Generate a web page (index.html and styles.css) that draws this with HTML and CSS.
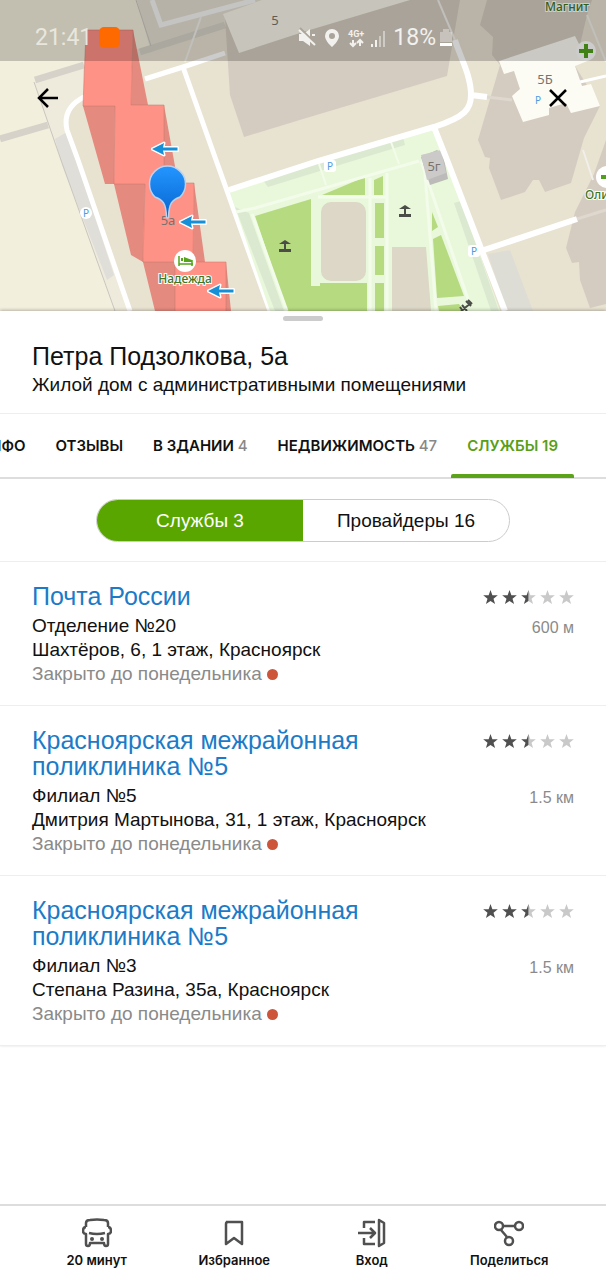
FILE: index.html
```html
<!DOCTYPE html>
<html lang="ru">
<head>
<meta charset="utf-8">
<meta name="viewport" content="width=device-width, initial-scale=1">
<title>Петра Подзолкова, 5а</title>
<link rel="stylesheet" href="styles.css">
</head>
<body>
<svg class="defs" aria-hidden="true">
  <symbol id="star" viewBox="0 0 16 16"><path d="M8 0l2 5.500 5.800.1-4.600 3.700L12.900 15 8 11.700 3.100 15l1.700-5.700L.2 5.600 6 5.500z"/></symbol>
  <symbol id="half" viewBox="0 0 16 16"><path fill="#c9c9c9" d="M8 0l2 5.500 5.800.1-4.600 3.700L12.900 15 8 11.700z"/><path d="M8 0v11.700L3.100 15l1.700-5.700L.2 5.600 6 5.500z"/></symbol>
  <symbol id="arrow" viewBox="0 0 28 16"><path d="M1 8L13 2 12 6.500H26.500V9.500H12L13 14z" fill="#1590d8" stroke="#fff" stroke-width="3" stroke-linejoin="round" paint-order="stroke"/></symbol>
  <symbol id="table" viewBox="0 0 12 12"><path d="M6 0L12 4H7V9H12V12H0V9H5V4H0z" fill="#4a4d48"/></symbol>
</svg>
<div class="app">
  <header class="map">
    <svg class="map-canvas" viewBox="0 0 606 311" preserveAspectRatio="xMidYMin slice" role="img" aria-label="Карта">
      <defs><linearGradient id="pin" x2="0" y2="1"><stop offset="0" stop-color="#2496ff"/><stop offset="1" stop-color="#0664cf"/></linearGradient></defs>
      <path fill="#f3efdd" d="M0 0h606v311H0z"/>
      <path fill="#e8e2d1" d="M137 0H606V311H130L78 160 66 128 70 110 83 98 83 66 150 45z"/>
      <path fill="#efebdc" d="M34 82L83 68V97L66 115V130L130 311H115L60 160z"/>
      <path fill="#dfded8" d="M55 139L67 132 114 275 107 280 62 165z"/>
      <path fill="#e4dfd3" d="M137 0H290L223 22 150 48z"/>
      <g fill="none" stroke="#d6d2c9">
        <path stroke-width="7" d="M35 80L84 65M0 139L48 125M140 52L225 25"/>
        <path stroke="#c9c6bf" d="M34 82L61 160 115 311M136 0L151 46"/>
      </g>
      <path fill="#d5ccc1" d="M225 18L230 95 244 137 303 119 447 76 460 0H400z"/>
      <path fill="#f9f6ea" d="M223 14L262 0H410L303 32 239 53z"/>
      <path fill="#d5ccc1" d="M487 0L480 25 493 37 492 55 500 65 478 140 485 157 490 158 489 168 501 200 525 192 533 180 539 180 545 192 571 183 584 138 600 106 575 66 587 15 592 0z"/>
      <path fill="#d5ccc1" d="M606 140L594 174 575 212 566 248 572 263 579 262 580 280 590 308 606 304z"/>
      <path fill="#deddd5" d="M488 254L510 250 533 311H507z"/>
      <g fill="none" stroke="#fff" stroke-width="5">
        <path d="M84 97Q62 108 67 130L78 160 130 311M145 79L183 67 225 53M183 67L216 160 270 311" />
        <path d="M152 0L161 25 255 0" stroke="#f6f5f4"/>
        <path stroke="#f1efe9" stroke-width="2" d="M201 17L185 62M438 0L455 40M583 150L593 180M587 15L606 62"/>
        <path stroke="#ded8cf" stroke-width="3" d="M487 97L512 100M577 219L606 210"/>
        <path d="M580 82L606 76" stroke-width="3"/>
      </g>
      <path fill="#e9f8da" d="M229 190L318 162 434 129 450 170 500 311H270z"/>
      <g fill="#dce9d1">
        <path d="M262 179L403 137 405 145 320 171 268 187z"/>
        <path d="M454 203L461 201 499 311H491z"/>
        <path d="M235 207L249 213 284 311H275z"/>
      </g>
      <path fill="#b6da80" d="M255 216L311 199V286H320V283H367V311H287zM322 195L365 177V195zM374 180L383 176V195H374zM375 203H384V238H375zM375 246H384V275H375zM375 283H384V311H375zM432 212L438 227 432 231zM433 239L441 235 464 296 437 298zM438 306L459 304 464 311H439z"/>
      <g fill="none" stroke="#f3fbea">
        <path stroke-width="3" d="M236 212L255 208 419 161M252 214L287 311M387 173V311M370 178V311M425 174L436 311M421 161L468 299M318 197H388"/>
        <path stroke-width="2" d="M319 164L326 185M391 142L399 164"/>
      </g>
      <rect x="321" y="202" width="45" height="79" rx="10" fill="#dcd7c6"/>
      <path fill="#dcd7c6" d="M392 247H426L431 311H392z"/>
      <path fill="#bdbbb9" d="M421 157L437 150 443 154 448 179 430 185z"/>
      <path fill="#cbcac8" d="M421 155L441 150 446 173 427 180z"/>
      <g fill="none" stroke="#fff" stroke-width="6">
        <path d="M229 190L318 161 434 127C465 117 471 109 471 95 471 75 460 57 455 40M471 95L487 97"/>
        <path d="M434 127L449 165 505 311M484 250L577 219"/>
      </g>
      <path fill="#fdfcf4" d="M499 61L575 36 582 50 590 60 575 66 582 86 591 84 600 106 571 113 566 103 549 108V115L523 122 512 96 520 89 514 71 504 74z"/>
      <g stroke="#c97469" stroke-width="1">
        <path fill="#e58a7f" stroke="none" d="M133 30L148 105H131zM83 106L115 105 114 184H105zM164 105L178 183H164zM114 184H145L143 255V262L131 255zM194 183L205 262H193zM143 262H175V311H155zM226 262L231 311H226z"/>
        <path fill="#ff9287" stroke-opacity=".5" d="M86 30H133L131 105H164V183H194L193 262H226V312H175V262H143L145 184H114L115 106H83z"/>
      </g>
      <use href="#arrow" x="151" y="141" width="28" height="16"/>
      <use href="#arrow" x="179" y="214" width="28" height="16"/>
      <use href="#arrow" x="207" y="283" width="28" height="16"/>
      <text class="house" x="168" y="225">5а</text>
      <path d="M166.500 217C166 203 163 200 155 197A18 18 0 1 1 180 197C172 200 169 203 168.500 217A1 1 0 0 1 166.500 217z" fill="url(#pin)" stroke="#b9d2f2" stroke-width="1.500"/>
      <circle cx="185" cy="261" r="11" fill="#fff"/>
      <path d="M179 256V266M179 264H193M192 266V260" fill="none" stroke="#54a51a" stroke-width="1.500"/>
      <path d="M184 257L192 260V262H184zM181 258h2v3h-2z" fill="#54a51a"/>
      <text class="poi" x="185" y="283">Надежда</text>
      <text class="poi" x="567" y="11">Магнит</text>
      <text class="poi poi-start" x="585" y="199">Оли</text>
      <text class="house" x="275" y="25">5</text>
      <text class="house" x="545" y="84">5Б</text>
      <text class="house" x="434" y="171">5г</text>
      <g fill="#fff"><circle cx="86" cy="213" r="6"/><rect x="324" y="160" width="12" height="12" rx="3"/><rect x="468" y="245" width="12" height="12" rx="3"/><circle cx="586" cy="51" r="10"/><circle cx="607" cy="177" r="11"/></g>
      <text class="parking" x="86" y="217">P</text><text class="parking" x="330" y="170">P</text><text class="parking" x="474" y="255">P</text><text class="parking" x="538" y="104">P</text>
      <path d="M586 44V58M579 51H593" stroke="#50a01b" stroke-width="4"/><path d="M601 177H606" stroke="#50a01b" stroke-width="4"/>
      <use href="#table" x="279" y="240" width="12" height="12"/><use href="#table" x="399" y="205" width="12" height="12"/>
      <path d="M461 311L471 303M462 305L467 311M460 307L463 311M466 301L471 306M468 300L472 304" stroke="#4a4d48" stroke-width="2"/>
    </svg>
    <div class="status">
      <span class="clock">21:41</span><span class="badge"></span>
      <svg class="status-icons" width="90" height="24" viewBox="0 0 90 24" fill="#f2f1ed">
        <path d="M4 8H8L15 3V20L8 15H4z"/><path d="M5 2L20 17" stroke="#aaa598" stroke-width="2"/><path d="M4 4L20 19" stroke="#f2f1ed" stroke-width="2"/><path d="M17 9H20" stroke="#f2f1ed" stroke-width="2"/>
        <path fill-rule="evenodd" d="M37 3a7 7 0 0 0-7 7c0 5 7 11 7 11s7-6 7-11a7 7 0 0 0-7-7zm0 4a3 3 0 1 1 0 6 3 3 0 0 1 0-6z"/>
        <text class="network" x="53" y="11">4G+</text><path d="M58 14V20M55 17L58 20 61 17M65 20V14M62 17L65 14 68 17" fill="none" stroke="#f2f1ed" stroke-width="2"/>
        <path d="M76 18h2v3h-2zM80 14h2v7h-2z"/><path opacity=".5" d="M84 10h2v11h-2zM88 5h2v16h-2z"/>
      </svg>
      <span class="charge">18%</span>
      <svg width="12" height="20" viewBox="0 0 12 20"><path d="M0 4H3V1H9V4H12V14H0z" fill="#f2f1ed" opacity=".4"/><path d="M0 15H12V18H0z" fill="#fff"/></svg>
    </div>
    <div class="map-actions">
      <button class="icon-button" aria-label="Назад"><svg width="24" height="24" viewBox="0 0 24 24"><path d="M22 12H3M12 3L3 12 12 21"/></svg></button>
      <button class="icon-button" aria-label="Закрыть"><svg width="24" height="24" viewBox="0 0 24 24"><path d="M4 4L20 20M20 4L4 20"/></svg></button>
    </div>
  </header>

  <main class="sheet">
    <div class="grip"></div>
    <div class="heading">
      <h1>Петра Подзолкова, 5а</h1>
      <p>Жилой дом с административными помещениями</p>
    </div>
    <nav class="tabs">
      <a href="#info">ИНФО</a>
      <a href="#reviews">ОТЗЫВЫ</a>
      <a href="#inside">В ЗДАНИИ <span>4</span></a>
      <a href="#estate">НЕДВИЖИМОСТЬ <span>47</span></a>
      <a class="active" href="#services">СЛУЖБЫ 19</a>
    </nav>
    <div class="switch-row">
      <div class="switch">
        <button class="selected">Службы 3</button>
        <button>Провайдеры 16</button>
      </div>
    </div>
    <section class="list">
      <article class="item">
        <div class="info">
          <h2><a href="#post">Почта России</a></h2>
          <p>Отделение №20</p>
          <p>Шахтёров, 6, 1 этаж, Красноярск</p>
          <p class="closed">Закрыто до понедельника<i class="dot"></i></p>
        </div>
        <div class="side">
          <div class="stars" role="img" aria-label="2,5 из 5"><svg><use href="#star"/></svg><svg><use href="#star"/></svg><svg><use href="#half"/></svg><svg class="empty"><use href="#star"/></svg><svg class="empty"><use href="#star"/></svg></div>
          <span class="distance">600 м</span>
        </div>
      </article>
      <article class="item tall">
        <div class="info">
          <h2><a href="#clinic5">Красноярская межрайонная поликлиника №5</a></h2>
          <p>Филиал №5</p>
          <p>Дмитрия Мартынова, 31, 1 этаж, Красноярск</p>
          <p class="closed">Закрыто до понедельника<i class="dot"></i></p>
        </div>
        <div class="side">
          <div class="stars" role="img" aria-label="2,5 из 5"><svg><use href="#star"/></svg><svg><use href="#star"/></svg><svg><use href="#half"/></svg><svg class="empty"><use href="#star"/></svg><svg class="empty"><use href="#star"/></svg></div>
          <span class="distance">1.5 км</span>
        </div>
      </article>
      <article class="item tall">
        <div class="info">
          <h2><a href="#clinic3">Красноярская межрайонная поликлиника №5</a></h2>
          <p>Филиал №3</p>
          <p>Степана Разина, 35а, Красноярск</p>
          <p class="closed">Закрыто до понедельника<i class="dot"></i></p>
        </div>
        <div class="side">
          <div class="stars" role="img" aria-label="2,5 из 5"><svg><use href="#star"/></svg><svg><use href="#star"/></svg><svg><use href="#half"/></svg><svg class="empty"><use href="#star"/></svg><svg class="empty"><use href="#star"/></svg></div>
          <span class="distance">1.5 км</span>
        </div>
      </article>
    </section>
  </main>

  <footer class="bottom">
    <button><svg viewBox="0 0 30 30"><path d="M4 9V5Q4 2 8 2Q15 1 22 2Q26 2 26 5V9M4 9Q1 9 1 13 1 16 4 16V26Q4 28 6 28 8 28 8 25H22Q22 28 24 28 26 28 26 26V16Q29 16 29 13 29 9 26 9M7 15Q15 17 23 15"/><circle class="solid" cx="10" cy="21" r="2"/><circle class="solid" cx="20" cy="21" r="2"/></svg>20 минут</button>
    <button><svg viewBox="0 0 30 30"><path d="M7 4H23V26L15 20 7 26V6Q7 4 9 4"/></svg>Избранное</button>
    <button><svg viewBox="0 0 30 30"><path d="M18 4H7V10M7 20V26H18M1 15H18M13 10L18 15 13 20M22 2L27 5V25L22 28z"/></svg>Вход</button>
    <button><svg viewBox="0 0 30 30"><circle cx="5" cy="8" r="4"/><circle cx="25" cy="8" r="4"/><circle cx="15" cy="23" r="4"/><path d="M9 8H21M7 12L13 19"/></svg>Поделиться</button>
  </footer>
</div>
</body>
</html>
```
FILE: styles.css
```css
* { box-sizing: border-box; }
body { margin: 0; background: #fff; color: #111; font-family: "Liberation Sans", Arial, sans-serif; }
h1, h2, p { margin: 0; font-weight: 400; }
a { color: inherit; text-decoration: none; }
button { font: inherit; color: inherit; background: none; border: 0; padding: 0; cursor: pointer; }
.defs { display: none; }
.app { display: flex; flex-direction: column; min-height: 100vh; overflow: hidden; }

.map { position: relative; aspect-ratio: 606 / 311; max-height: 420px; overflow: hidden; }
.map-canvas { display: block; width: 100%; height: 100%; }
.map text { font-family: "Noto Sans", sans-serif; }
.house { font-size: 13px; fill: #77736e; text-anchor: middle; }
.poi { font-size: 12px; font-weight: 500; fill: #3d771f; text-anchor: middle; stroke: #fff; stroke-width: 2px; paint-order: stroke; }
.poi-start { text-anchor: start; }
.parking { font-size: 10px; fill: #4b9be0; text-anchor: middle; }
.status { position: absolute; inset: 0 0 auto; height: 61px; padding: 14px 154px 0 35px; display: flex; align-items: center; background: rgb(0 0 0 / 20%); color: #f2f1ed; font: 23px Roboto, sans-serif; }
.clock { color: #e9e7dd; }
.badge { width: 21px; height: 21px; margin-left: 7px; border-radius: 5px; background: #ff6a00; }
.status-icons { margin-left: auto; flex: none; }
.map .network { font: 700 9px Roboto, sans-serif; }
.charge { margin: 0 4px 0 8px; }
.map-actions { position: absolute; inset: 78px 28px auto; display: flex; justify-content: space-between; }
.icon-button { width: 40px; height: 40px; display: grid; place-items: center; }
.icon-button path { fill: none; stroke: #000; stroke-width: 2.500; }

.sheet { position: relative; background: #fff; box-shadow: 0 -1px 3px rgb(0 0 0 / 25%); }
.grip { width: 40px; height: 5px; margin: 5px auto 0; border-radius: 3px; background: #ccc; }
.heading { padding: 20px 32px 14px; border-bottom: 1px solid #eee; }
h1 { font-size: 25px; line-height: 30px; }
.heading p { font-size: 19px; line-height: 28px; }
.tabs { display: flex; justify-content: flex-end; gap: 30px; padding: 0 48px 0 32px; border-bottom: 2px solid #ddd; font: 600 15px/63px Inter, sans-serif; white-space: nowrap; }
.tabs span { color: #888; font-weight: 500; }
.tabs .active { position: relative; color: #5a9e18; }
.tabs .active::after { content: ""; position: absolute; inset: auto -16px -1px; height: 4px; border-radius: 2px 2px 0 0; background: #5ba318; }
.switch-row { display: flex; justify-content: center; padding: 20px 32px 19px; border-bottom: 1px solid #eee; }
.switch { display: flex; width: 100%; max-width: 414px; height: 43px; border: 1px solid #ccc; border-radius: 22px; overflow: hidden; font-size: 19px; }
.switch button { flex: 1; }
.switch .selected { background: #59a600; color: #fff; }

.item { display: flex; justify-content: space-between; gap: 24px; padding: 21px 32px 19px; border-bottom: 1px solid #eee; }
.info { font-size: 19px; line-height: 24px; }
h2 { max-width: 400px; margin-bottom: 5px; color: #1b7bc8; font-size: 25px; line-height: 26px; }
.closed { color: #8a8a8a; }
.dot { display: inline-block; width: 11px; height: 11px; margin-left: 5px; border-radius: 50%; background: #cc553a; }
.side { display: flex; flex-direction: column; align-items: flex-end; flex: none; }
.stars { display: flex; gap: 4px; padding-top: 7px; }
.stars svg { width: 15px; height: 15px; fill: #505050; }
.stars .empty { fill: #c9c9c9; }
.distance { margin-top: 11px; color: #8a8a8a; font-size: 16px; line-height: 24px; }
.tall .distance { margin-top: 37px; }

.bottom { display: grid; grid-template-columns: repeat(4, 1fr); margin-top: auto; padding: 12px 28px 11px; border-top: 2px solid #ddd; font: 600 13px/18px Inter, sans-serif; }
.bottom button { display: flex; flex-direction: column; align-items: center; gap: 3px; }
.bottom svg { width: 30px; height: 30px; fill: none; stroke: #505050; stroke-width: 2.500; stroke-linejoin: round; }
.bottom .solid { fill: #505050; stroke: none; }
```
